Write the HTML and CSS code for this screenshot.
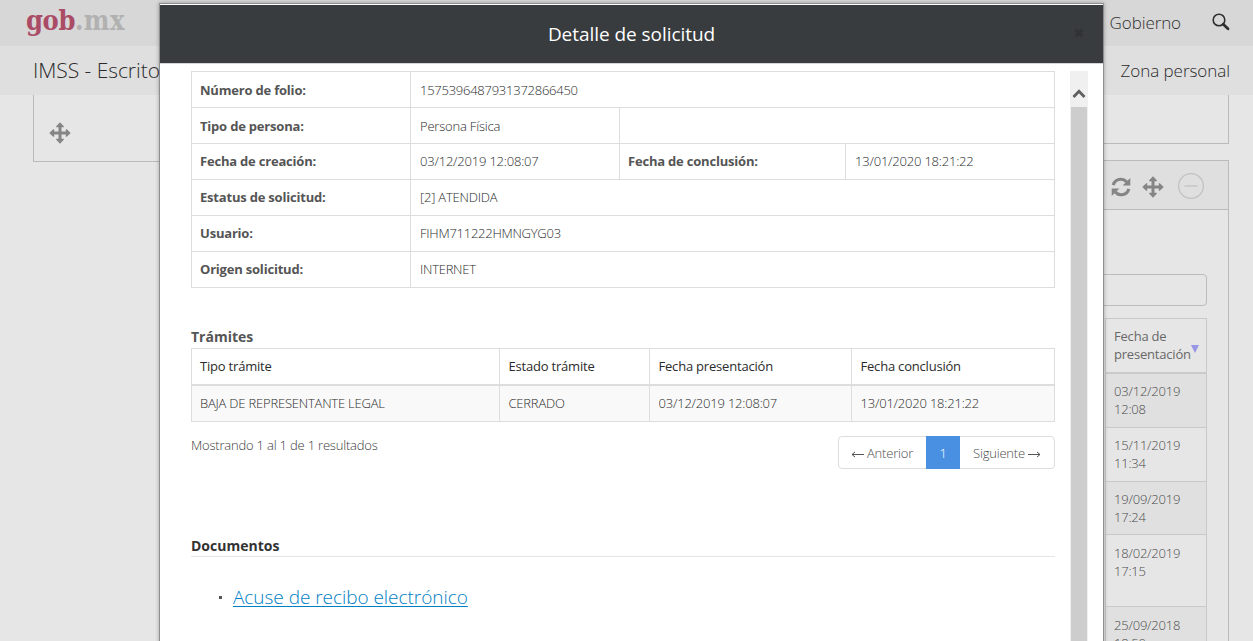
FILE: index.html
```html
<!DOCTYPE html>
<html lang="es">
<head>
<meta charset="utf-8">
<title>IMSS - Escritorio Virtual</title>
<link rel="stylesheet" href="styles.css">
</head>
<body>
<svg class="defs" width="0" height="0" aria-hidden="true">
  <symbol id="move" viewBox="0 0 22 22"><path d="M11 .3 14.8 4.2V5.2H12.5V9.5H16.8V7.2H17.8L21.7 11 17.8 14.8H16.8V12.5H12.5V16.8H14.8V17.8L11 21.7 7.2 17.8V16.8H9.5V12.5H5.2V14.8H4.2L.3 11 4.2 7.2H5.2V9.5H9.5V5.2H7.2V4.2Z"/></symbol>
</svg>
<div class="page">
  <header class="topbar">
    <div class="logo"><span class="logo-gob">gob</span><span class="logo-mx">.mx</span></div>
    <nav class="topnav">
      <span class="gobierno">Gobierno</span>
      <svg class="search" viewBox="0 0 18 18"><circle cx="7" cy="7" r="5.8" fill="none" stroke="#2e2e2e" stroke-width="1.6"/><path d="M11.2 11.2 16 15.7" stroke="#2e2e2e" stroke-width="2.8" stroke-linecap="round"/></svg>
    </nav>
  </header>
  <div class="subbar"><span class="brand">IMSS - Escritorio Virtual</span><span class="zona">Zona personal</span></div>
  <main class="columns">
    <section class="left-widget"><svg class="icon"><use href="#move"/></svg></section>
    <div class="right-col">
      <section class="top-widget"></section>
      <section class="widget">
        <div class="widget-head">
          <svg class="refresh" viewBox="0 0 20 20"><path d="M2.2 8.2A7.8 7.8 0 0 1 15.6 4.9M17.8 11.8A7.8 7.8 0 0 1 4.4 15.1" fill="none" stroke="#858585" stroke-width="3.1"/><path d="M19.3 1V8.6H11.6ZM.7 19V11.4H8.4Z" fill="#858585"/></svg>
          <svg class="icon"><use href="#move"/></svg>
          <svg class="minus" viewBox="0 0 28 28"><circle cx="14" cy="14" r="12.4"/><path d="M7.5 14H20.5"/></svg>
        </div>
        <div class="widget-body">
          <div class="field"></div>
          <div class="dates">
            <div class="date-head"><span>Fecha de<br>presentación</span><i class="sort"></i></div>
            <div class="date odd">03/12/2019<br>12:08</div>
            <div class="date">15/11/2019<br>11:34</div>
            <div class="date odd short">19/09/2019<br>17:24</div>
            <div class="date tall">18/02/2019<br>17:15</div>
            <div class="date odd">25/09/2018<br>18:50</div>
          </div>
        </div>
      </section>
    </div>
  </main>
</div>

<div class="modal">
  <div class="modal-head"><h1>Detalle de solicitud</h1><svg class="close" viewBox="0 0 10 10"><path d="M1.5 1.5 8.5 8.5M8.5 1.5 1.5 8.5"/></svg></div>
  <div class="modal-main">
    <div class="content">
      <table class="info">
        <colgroup><col class="i1"><col class="i2"><col class="i3"><col class="i4"></colgroup>
        <tr><th>Número de folio:</th><td colspan="3"><span class="folio">1575396487931372866450</span></td></tr>
        <tr><th>Tipo de persona:</th><td>Persona Física</td><td colspan="2"></td></tr>
        <tr class="raised"><th>Fecha de creación:</th><td>03/12/2019 12:08:07</td><th>Fecha de conclusión:</th><td>13/01/2020 18:21:22</td></tr>
        <tr class="raised"><th>Estatus de solicitud:</th><td colspan="3">[2] ATENDIDA</td></tr>
        <tr class="raised"><th>Usuario:</th><td colspan="3"><span class="folio">FIHM711222HMNGYG03</span></td></tr>
        <tr class="raised"><th>Origen solicitud:</th><td colspan="3"><span class="folio">INTERNET</span></td></tr>
      </table>
      <h2 class="tramites-title">Trámites</h2>
      <table class="tramites">
        <colgroup><col class="t1"><col class="t2"><col class="t3"><col class="t4"></colgroup>
        <tr class="heads"><td>Tipo trámite</td><td>Estado trámite</td><td>Fecha presentación</td><td>Fecha conclusión</td></tr>
        <tr class="row"><td>BAJA DE REPRESENTANTE LEGAL</td><td>CERRADO</td><td>03/12/2019 12:08:07</td><td>13/01/2020 18:21:22</td></tr>
      </table>
      <div class="foot">
        <span class="count">Mostrando 1 al 1 de 1 resultados</span>
        <div class="pager">
          <span class="prev"><svg class="arrow" viewBox="0 0 13 8"><path d="M13 4.5H1M4 2 1 4.5 4 7"/></svg>Anterior</span><span class="current">1</span><span class="next">Siguiente<svg class="arrow" viewBox="0 0 13 8"><path d="M0 4.5H12M9 2 12 4.5 9 7"/></svg></span>
        </div>
      </div>
      <h2 class="docs-title">Documentos</h2>
      <ul class="docs"><li><a>Acuse de recibo electrónico</a></li></ul>
    </div>
    <div class="scroll"><div class="scroll-up"><svg viewBox="0 0 14 12"><path d="M1.5 10 7 4.2 12.5 10"/></svg></div><div class="thumb"></div></div>
  </div>
</div>
</body>
</html>
```
FILE: styles.css
```css
* { box-sizing: border-box; }
html, body { margin: 0; height: 641px; overflow: hidden; }
body { font-family: "Open Sans", "Noto Sans", sans-serif; font-weight: 300; font-size: 13px; line-height: 18px; letter-spacing: -.2px; color: #2b2b2b; background: #e6e6e6; position: relative; }
h1, h2, ul { margin: 0; padding: 0; }
svg { display: block; flex: none; }
.defs { position: absolute; }

.topbar { height: 46px; background: #d7d7d7; display: flex; justify-content: space-between; padding: 0 23px 0 26px; }
.logo { font-family: "DejaVu Serif Condensed", "DejaVu Serif", serif; font-stretch: condensed; font-weight: 700; font-size: 27px; line-height: 42px; white-space: nowrap; }
.logo-gob { color: #ab4c66; letter-spacing: -.4px; }
.logo-mx { color: #b1b1b1; letter-spacing: .4px; }
.topnav { display: flex; align-items: flex-start; gap: 31px; color: #303030; font-size: 17px; letter-spacing: -.1px; }
.gobierno { line-height: 46px; }
.search { width: 18px; height: 18px; margin-top: 13px; }
.subbar { height: 49px; background: #dfdfdf; display: flex; justify-content: space-between; padding: 0 23px 0 33px; line-height: 49px; color: #2b2b2b; }
.brand { font-size: 21px; letter-spacing: -.05px; }
.zona { font-size: 17px; line-height: 49px; letter-spacing: -.05px; }
.columns { display: grid; grid-template-columns: 400px 1fr; gap: 24px; padding: 0 24px 0 33px; height: 546px; }
.left-widget { height: 67px; border: 1px solid #bababa; border-top: 0; padding: 27px 15px; }
.icon { width: 22px; height: 22px; fill: #858585; }
.top-widget { height: 49px; border: 1px solid #bababa; border-top: 0; margin-bottom: 16px; }
.widget { border: 1px solid #bababa; height: 500px; }
.widget-head { height: 49px; background: #dfdfdf; border-bottom: 1px solid #bababa; display: flex; justify-content: flex-end; align-items: center; padding: 4px 23px 0 0; }
.refresh { width: 20px; height: 20px; margin-right: 11px; }
.minus { width: 28px; height: 28px; margin: -3px 0 0 13px; fill: none; stroke: #c2c2c2; stroke-width: 1.3; }
.widget-body { padding: 64px 21px 0 24px; color: #4c4c4c; }
.field { height: 32px; border: 1px solid #bcbcbc; border-radius: 4px; margin-bottom: 12px; }
.dates { width: 102px; margin-left: auto; border: 1px solid #c9c9c9; border-bottom: 0; }
.date-head { height: 55px; padding: 8px 0 0 8px; border-bottom: 2px solid #cacaca; font-weight: 400; display: flex; color: #686868; }
.sort { width: 0; height: 0; border: 4.5px solid transparent; border-top: 8px solid #9797e5; border-bottom: 0; margin: 18px 0 0 0; }
.date { height: 54px; padding: 8px 8px 0; border-bottom: 1px solid #c9c9c9; }
.date.odd { background: #e0e0e0; }
.date.short { height: 53px; }
.date.tall { height: 72px; padding-top: 9px; }
.date:last-child { padding-top: 9px; }

.modal { position: absolute; left: 159px; top: 3px; width: 945px; height: 660px; background: #fff; border: 1px solid #8e8e8e; box-shadow: 0 0 4px rgba(0,0,0,.3); padding-top: 1px; }
.modal-head { height: 59px; background: #393c3f; border-bottom: 1px solid #d5d5d5; display: grid; grid-template-columns: 1fr 24px; align-items: center; padding-left: 24px; }
.modal-head h1 { font-weight: 400; font-size: 19px; letter-spacing: -.05px; color: #fff; text-align: center; line-height: 24px; }
.close { width: 10px; height: 10px; margin-left: -5px; margin-top: -2px; }
.close path { stroke: #303235; stroke-width: 3; }
.modal-main { display: flex; justify-content: space-between; padding: 7px 15px 0 31px; }
.content { width: 864px; }
table { width: 863px; table-layout: fixed; border-collapse: collapse; }
th, td { height: 36px; padding: 0 8px; border: 1px solid #ddd; text-align: left; line-height: 18px; }
th { font-weight: 700; color: #555; }
.info td { padding-left: 9px; padding-top: 1px; }
.info th { padding-top: 1px; }
.info .raised th, .info .raised td { padding-top: 0; padding-bottom: 1px; }
.i1 { width: 219px; } .i2 { width: 209px; } .i3 { width: 226px; } .i4 { width: 209px; }
.t1 { width: 308px; } .t2 { width: 150px; } .t3 { width: 202px; } .t4 { width: 203px; }
.folio { letter-spacing: -.25px; }
.tramites-title, .docs-title { font-weight: 700; font-size: 14px; line-height: 20px; letter-spacing: 0; }
.tramites-title { color: #555; margin: 39px 0 1px; }
.heads td { font-weight: 400; border-bottom-width: 2px; }
.tramites td + td { padding-left: 8.5px; }
.row td { background: #f9f9f9; height: 37px; }
.foot { display: flex; justify-content: space-between; margin-top: 14px; height: 33px; color: #3a3a3a; }
.pager { display: flex; border: 1px solid #ddd; border-radius: 4px; width: 217px; height: 33px; line-height: 33px; color: #4c4c4c; }
.pager span { display: flex; align-items: center; height: 31px; }
.prev { width: 87px; padding-left: 12px; gap: 3px; padding-top: 2px; }
.pager .current { width: 34px; height: 33px; margin-top: -1px; background: #4a90e2; color: #fff; justify-content: center; padding-top: 2px; }
.next { padding: 2px 0 0 13px; gap: 3px; }
.arrow { width: 13px; height: 8px; fill: none; stroke: #555; stroke-width: 1; }
.docs-title { color: #333; margin-top: 67px; border-bottom: 1px solid #e5e5e5; height: 21px; }
.docs { list-style: none; margin: 27px 0 0 27px; }
.docs li { display: flex; align-items: center; font-size: 19px; line-height: 26px; letter-spacing: -.04px; }
.docs li::before { content: ""; width: 3px; height: 3px; background: #555; margin: 0 11px 0 1px; }
.docs a { color: #0080c4; text-decoration: underline; text-decoration-thickness: 1px; text-underline-offset: 2px; }
.scroll { width: 18px; height: 590px; background: #f0f0f0; display: flex; flex-direction: column; padding: 0 1px; }
.scroll-up { height: 36px; padding: 16px 1px 0; }
.scroll-up svg { width: 14px; height: 12px; fill: none; stroke: #606060; stroke-width: 2.8; }
.thumb { flex: 1; background: #cdcdcd; }
```
